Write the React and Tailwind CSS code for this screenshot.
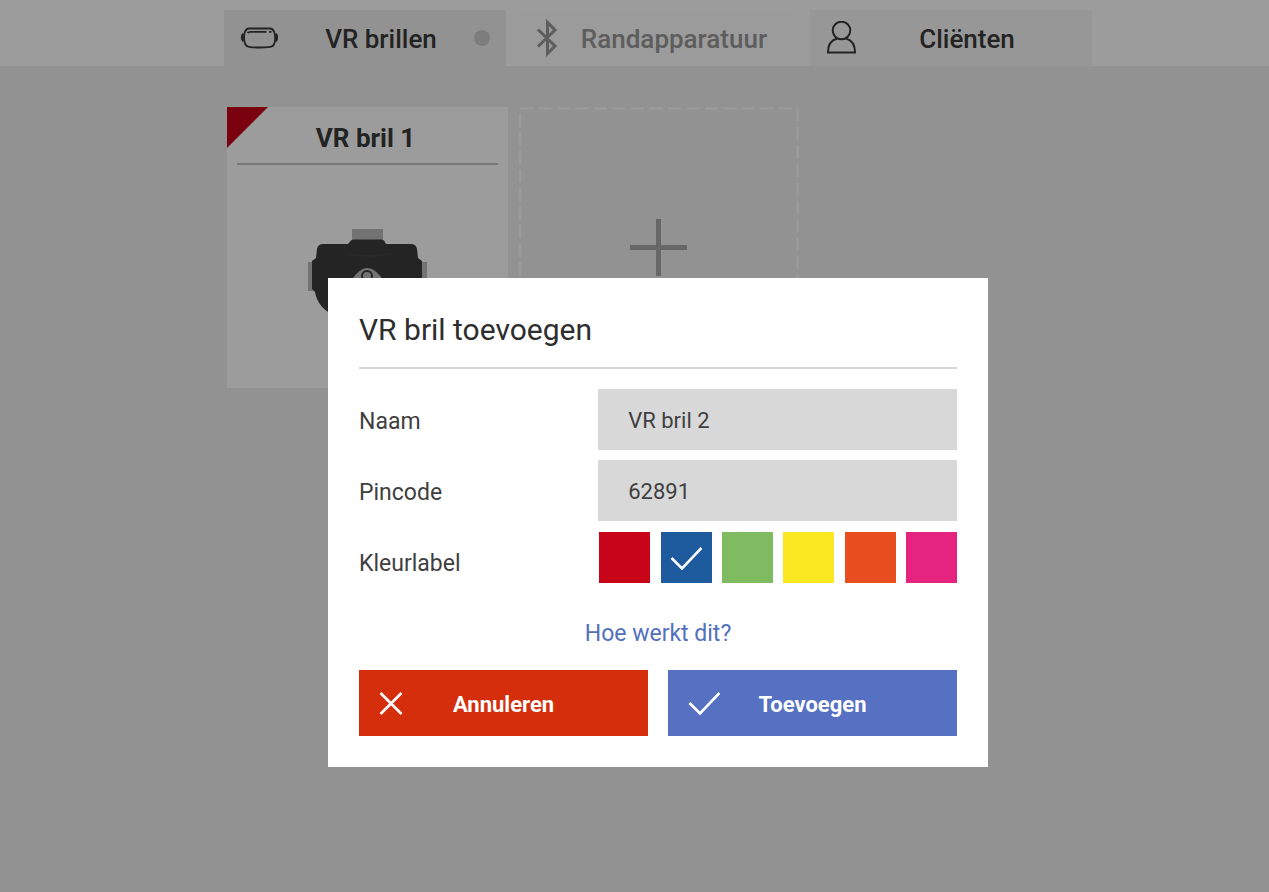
import React, { useState } from 'react';

const COLORS = [
    { id: 'rood', label: 'Rood', className: 'bg-[#c80419]' },
    { id: 'blauw', label: 'Blauw', className: 'bg-[#1d5a9e]' },
    { id: 'groen', label: 'Groen', className: 'bg-[#7fbb60]' },
    { id: 'geel', label: 'Geel', className: 'bg-[#fbe822]' },
    { id: 'oranje', label: 'Oranje', className: 'bg-[#e94e20]' },
    { id: 'roze', label: 'Roze', className: 'bg-[#e5247f]' },
];

const GlassesIcon = () => (
    <svg className="mr-2" width="38" height="22" viewBox="0 0 38 22" fill="none" stroke="currentColor" strokeWidth="1.8" aria-hidden="true">
        <path d="M9 1.500H30C32 1.500 33 2.500 34 4.500C35.500 8.500 35.500 12 34.500 16C33.800 18.500 32.500 19.600 30.500 19.800C22.500 20.800 16.500 20.800 9 19.800C6.500 19.600 5.500 18.500 4.800 16C3.700 12 3.700 8.500 5 4.500C6 2.500 7 1.500 9 1.500Z" />
        <path d="M7.500 6C8.500 4.800 9.500 4.800 10.500 4.800H26.500M29 4.800H31.500" strokeWidth="1.8" />
        <path d="M3.500 7C1.500 8.500 1.500 12.500 3.500 14M35.500 7C37.500 8.500 37.500 12.500 35.500 14" strokeWidth="2.400" />
    </svg>
);

const BluetoothIcon = () => (
    <svg width="30" height="38" viewBox="0 0 30 38" fill="none" stroke="currentColor" strokeWidth="3" aria-hidden="true">
        <path d="M5 10.500L22 27L14.500 34.500V3.500L22 11L5 27.500" />
    </svg>
);

const PersonIcon = () => (
    <svg width="30" height="34" viewBox="0 0 30 34" fill="none" stroke="currentColor" strokeWidth="2" aria-hidden="true">
        <circle cx="15.500" cy="9.500" r="8.800" />
        <path d="M11 17.500C5.500 19 2 24 2 31.500H29C29 24 25.500 19 20 17.500" />
    </svg>
);

const CheckIcon = () => (
    <svg width="32" height="24" viewBox="0 0 32 24" fill="none" stroke="currentColor" strokeWidth="2.600" aria-hidden="true">
        <path d="M1.500 12L12 22.500L31.500 2" />
    </svg>
);

const CrossIcon = () => (
    <svg width="24" height="24" viewBox="0 0 24 24" fill="none" stroke="currentColor" strokeWidth="2.600" aria-hidden="true">
        <path d="M1.500 2L22.500 23M22.500 2L1.500 23" />
    </svg>
);

const PlusIcon = () => (
    <svg width="59" height="59" viewBox="0 0 59 59" stroke="currentColor" strokeWidth="5" aria-hidden="true">
        <path d="M0 29.500H57M28.500 1V58" />
    </svg>
);

const Headset = () => (
    <svg width="120" height="96" viewBox="0 0 120 96" aria-hidden="true">
        <rect x="44" y="0" width="31" height="14" fill="#bcbcbc" />
        <rect x="0" y="33" width="8" height="29" fill="#bcbcbc" />
        <rect x="111" y="33" width="8" height="29" fill="#bcbcbc" />
        <path d="M9 20Q10 15 15 15H40L43 11.500Q44 10.500 46 10.500H73Q75 10.500 76 11.500L78 15H103Q108 15 109 20L110 29L114 32V60Q108 82 92 87Q80 90 74 82Q60 68 46 82Q40 90 28 87Q10 80 7 63L4 60V32L8 29Z" fill="#3c3c3c" />
        <path d="M40 25Q60 29 82 25" stroke="#464646" fill="none" />
        <path d="M43 52Q59 26 76 52Q60 66 43 52Z" fill="#bcbcbc" />
        <circle cx="59" cy="47" r="5" fill="none" stroke="#3c3c3c" strokeWidth="2" />
    </svg>
);

function Tab({ icon, label, className, status }) {
    return (
        <button type="button" className={`flex h-14 items-center px-4 text-[26px] font-medium ${className}`}>
            {icon}
            <span className="flex-1 pt-0.5 pl-0.5 text-center">{label}</span>
            {status && <span className="size-4 shrink-0 rounded-full bg-[#cdcdcd]" />}
        </button>
    );
}

function FormRow({ label, htmlFor, children }) {
    return (
        <div className="flex h-[61px]">
            <label htmlFor={htmlFor} className="flex flex-1 items-center pt-1.5 text-[23px] text-[#3f3f3f]">{label}</label>
            <div className="w-3/5">{children}</div>
        </div>
    );
}

function ActionButton({ type, icon, label, className }) {
    return (
        <button type={type} className={`grid h-[66px] grid-cols-[32px_1fr_32px] items-center px-5 ${className}`}>
            {icon}
            <span className="pt-0.5">{label}</span>
        </button>
    );
}

function AddGlassesDialog() {
    const [naam, setNaam] = useState('VR bril 2');
    const [pincode, setPincode] = useState('62891');
    const [kleur, setKleur] = useState('blauw');

    return (
        <div role="dialog" aria-modal="true" aria-labelledby="dialog-title" className="w-full max-w-[660px] bg-white p-[31px] text-[22px]">
            <h2 id="dialog-title" className="border-b-2 border-[#d6d6d6] pb-4 text-[30px] leading-[42px] text-[#2e2e2e]">VR bril toevoegen</h2>
            <form className="pt-5" onSubmit={(e) => e.preventDefault()}>
                <div className="flex flex-col gap-[10px]">
                    <FormRow label="Naam" htmlFor="naam">
                        <input id="naam" type="text" value={naam} onChange={(e) => setNaam(e.target.value)} className="h-full w-full bg-[#d8d8d8] px-[30px] pt-0.5 text-[#3f3f3f] outline-none" />
                    </FormRow>
                    <FormRow label="Pincode" htmlFor="pincode">
                        <input id="pincode" type="text" value={pincode} onChange={(e) => setPincode(e.target.value)} className="h-full w-full bg-[#d8d8d8] px-[30px] pt-0.5 text-[#3f3f3f] outline-none" />
                    </FormRow>
                    <FormRow label="Kleurlabel" htmlFor={kleur}>
                        <div className="flex justify-between pt-px pl-px">
                            {COLORS.map(color => (
                                <div key={color.id} className={`relative size-[51px] ${color.className}`}>
                                    <input id={color.id} type="radio" name="kleur" aria-label={color.label} checked={kleur === color.id} onChange={() => setKleur(color.id)} className="block size-full cursor-pointer appearance-none" />
                                    {kleur === color.id && (
                                        <span className="pointer-events-none absolute inset-0 flex items-center justify-center text-white"><CheckIcon /></span>
                                    )}
                                </div>
                            ))}
                        </div>
                    </FormRow>
                </div>
                <p className="pt-[27px] pb-[21px] text-center text-[23px] leading-[30px]">
                    <a href="#uitleg" className="text-[#5470bd]">Hoe werkt dit?</a>
                </p>
                <div className="grid grid-cols-2 gap-5 font-bold text-white">
                    <ActionButton type="button" icon={<CrossIcon />} label="Annuleren" className="bg-[#d42e0c]" />
                    <ActionButton type="submit" icon={<CheckIcon />} label="Toevoegen" className="bg-[#5671c2]" />
                </div>
            </form>
        </div>
    );
}

export default function App() {
    return (
        <div className="min-h-screen bg-[#efefef] font-['Roboto',sans-serif] text-[#3a3a3a]">
            <header className="bg-white pt-[10px] pl-[47px]">
                <nav className="mx-auto grid max-w-[868px] grid-cols-3 gap-[11px]">
                    <Tab icon={<GlassesIcon />} label="VR brillen" className="bg-[#efefef]" status />
                    <Tab icon={<BluetoothIcon />} label="Randapparatuur" className="bg-[#fdfdfd] text-[#999]" />
                    <Tab icon={<PersonIcon />} label="Cliënten" className="bg-[#f7f7f7]" />
                </nav>
            </header>
            <main className="pt-[41px] pl-[47px]">
                <div className="mx-auto grid max-w-[868px] grid-cols-3 gap-[11px] pl-[3px]">
                    <article className="relative aspect-square bg-white px-[10px]">
                        <svg className="absolute top-0 left-0" width="41" height="41" viewBox="0 0 41 41" aria-hidden="true">
                            <path d="M0 0H41L0 41Z" fill="#c80419" />
                        </svg>
                        <h3 className="border-b-2 border-[#c4c4c4] pt-3 pb-1.5 pr-1 text-center text-[26px] leading-[38px] font-bold">VR bril 1</h3>
                        <div className="flex justify-center pt-16"><Headset /></div>
                    </article>
                    <button type="button" aria-label="VR bril toevoegen" className="relative flex aspect-square items-center justify-center text-[#a8a8a8]">
                        <svg className="absolute inset-0 size-full" fill="none" stroke="#fff" strokeOpacity="0.85" strokeWidth="2.400" strokeDasharray="13 5.500" aria-hidden="true">
                            <rect x="1" y="1.500" width="277.500" height="277.500" />
                        </svg>
                        <PlusIcon />
                    </button>
                </div>
            </main>
            <div className="fixed inset-0 flex items-center justify-center bg-black/39 pt-[153px] pl-[47px]">
                <AddGlassesDialog />
            </div>
        </div>
    );
}
